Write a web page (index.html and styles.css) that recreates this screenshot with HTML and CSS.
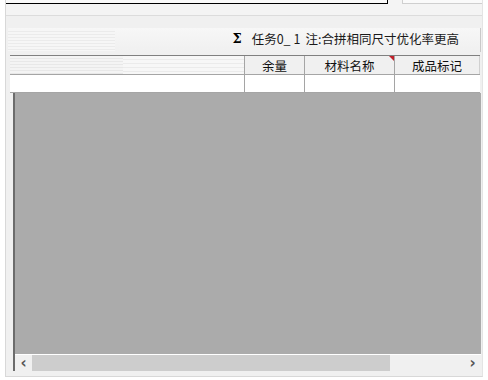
FILE: index.html
```html
<!DOCTYPE html>
<html lang="zh-CN">
<head>
    <meta charset="UTF-8">
    <meta name="viewport" content="width=device-width, initial-scale=1.0">
    <title>任务列表</title>
    <link rel="stylesheet" href="styles.css">
</head>
<body>
    <div class="window">
        <div class="topbar">
            <div class="field field-main"></div>
            <div class="field field-side"></div>
        </div>

        <div class="toolbar">
            <div class="grip"></div>
            <div class="status">
                <span class="sigma">Σ</span>
                <span class="task">任务0_<span class="count">1</span></span>
                <span class="note">注:合拼相同尺寸优化率更高</span>
            </div>
        </div>

        <div class="grid">
            <div class="row header">
                <div class="cell col-first striped"></div>
                <div class="cell col-rest">余量</div>
                <div class="cell col-name">材料名称<span class="mark"></span></div>
                <div class="cell col-tag">成品标记</div>
            </div>
            <div class="row data">
                <div class="cell col-first"></div>
                <div class="cell col-rest"></div>
                <div class="cell col-name"></div>
                <div class="cell col-tag"></div>
            </div>
            <div class="client">
                <div class="empty"></div>
                <div class="hscroll">
                    <div class="arrow">&lsaquo;</div>
                    <div class="thumb"></div>
                    <div class="track"></div>
                    <div class="arrow">&rsaquo;</div>
                </div>
            </div>
        </div>
    </div>
</body>
</html>
```

FILE: styles.css
```css
body {
    margin: 0;
    padding: 0;
    width: 488px;
    height: 380px;
    background-color: #ffffff;
    font-family: "Noto Sans CJK SC", "Noto Sans", sans-serif;
    font-size: 12px;
    color: #000;
    overflow: hidden;
}

.window {
    margin-left: 5px;
    width: 478px;
    height: 377px;
    box-sizing: border-box;
    background-color: #f0f0f0;
    border-left: 1px solid #d8d8d8;
    border-right: 1px solid #e4e4e4;
    border-bottom: 1px solid #d8d8d8;
}

.topbar {
    display: flex;
    height: 16px;
    box-sizing: border-box;
    border-bottom: 1px solid #dcdcdc;
    background-color: #f4f4f4;
}

.field {
    height: 4px;
    box-sizing: border-box;
    background-color: #fafafa;
}

.field-main {
    width: 382px;
    border-bottom: 1px solid #000;
    border-right: 1px solid #000;
}

.field-side {
    width: 80px;
    margin-left: 14px;
    border-bottom: 1px solid #cfcfcf;
    border-left: 1px solid #cfcfcf;
}

.toolbar {
    display: flex;
    align-items: center;
    margin-top: 12px;
    margin-left: 2px;
    width: 473px;
    height: 24px;
    box-sizing: border-box;
    border-right: 1px solid #c9c9c9;
    background: linear-gradient(#f7f7f7, #f0f0f0);
}

.grip {
    width: 107px;
    height: 22px;
    background: repeating-linear-gradient(#f6f6f6 0, #f6f6f6 2px, #ebebeb 2px, #ebebeb 3px);
}

.status {
    flex: 1;
    display: flex;
    justify-content: flex-end;
    align-items: center;
    padding-right: 21px;
    padding-bottom: 3px;
    white-space: nowrap;
    font-size: 12.5px;
    color: #1a1a1a;
}

.sigma {
    font-family: "DejaVu Serif", serif;
    font-weight: bold;
    font-size: 13px;
    color: #000;
    margin-right: 10px;
}

.task {
    margin-right: 5px;
}

.count {
    margin-left: 3px;
}

.grid {
    margin-top: 3px;
    margin-left: 4px;
    width: 470px;
}

.row {
    display: flex;
    box-sizing: border-box;
    border-bottom: 1px solid #a5a5a5;
}

.header {
    height: 20px;
    border-top: 1px solid #808080;
    background-color: #f0f0f0;
}

.data {
    height: 18px;
    background-color: #ffffff;
}

.cell {
    position: relative;
    box-sizing: border-box;
    display: flex;
    align-items: center;
    justify-content: center;
    font-size: 12.5px;
    color: #111;
}

.col-first {
    width: 234px;
}

.col-rest {
    width: 60px;
    border-left: 1px solid #a5a5a5;
}

.col-name {
    width: 90px;
    border-left: 1px solid #a5a5a5;
}

.col-tag {
    width: 86px;
    border-left: 1px solid #a5a5a5;
}

.header .col-tag {
    border-right: 1px solid #d0d0d0;
}

.striped {
    background:
        repeating-linear-gradient(#f4f4f4 0, #f4f4f4 2px, #e8e8e8 2px, #e8e8e8 3px) left / 113px 100% no-repeat,
        repeating-linear-gradient(#f7f7f7 0, #f7f7f7 3px, #ebebeb 3px, #ebebeb 4px);
}

.mark {
    position: absolute;
    top: 0;
    right: 0;
    width: 0;
    height: 0;
    border-top: 5px solid #c0202a;
    border-left: 5px solid transparent;
}

.client {
    margin-left: 3px;
    width: 466px;
    border-left: 2px solid #6c6c6c;
}

.empty {
    height: 261px;
    background-color: #ababab;
    border-bottom: 1px solid #ffffff;
}

.hscroll {
    display: flex;
    height: 16px;
    background-color: #f0f0f0;
}

.arrow {
    width: 17px;
    display: flex;
    align-items: center;
    justify-content: center;
    font-family: "DejaVu Sans", sans-serif;
    font-weight: bold;
    font-size: 15px;
    color: #555;
    line-height: 1;
}

.thumb {
    width: 358px;
    background-color: #cdcdcd;
}

.track {
    flex: 1;
}
```
